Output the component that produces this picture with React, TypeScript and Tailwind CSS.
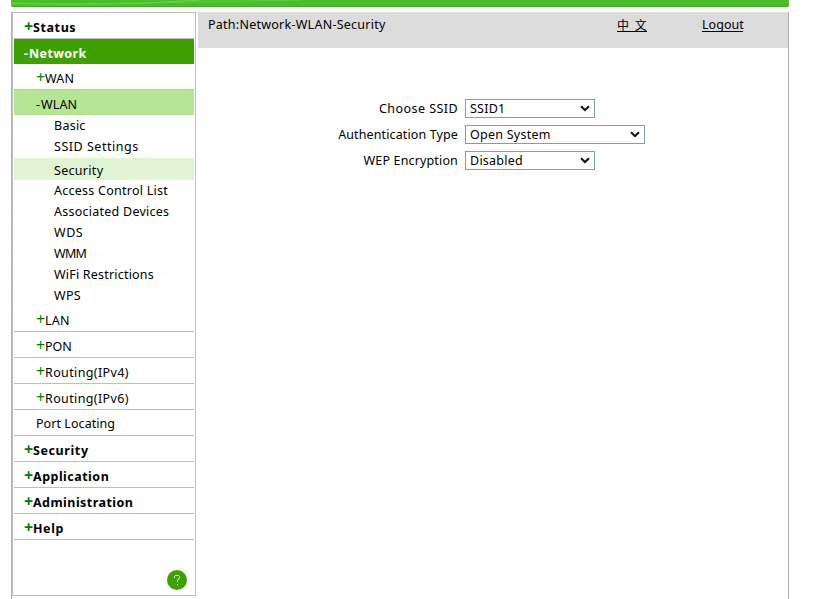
import React from "react";

type Item = { label: string; sign?: string; row: string; text: string };

const top = "h-[26px] border-b border-[#c0c0c0] pl-[10px] font-bold pt-[7px]";
const mid = "h-[26px] border-b border-[#c0c0c0] pl-[22px] pt-[7px]";
const sub = "h-[21px] border-b border-[#fbfff2] pl-[40px] pt-[3px]";

const items: Item[] = [
  { label: "Status", sign: "+", row: top, text: "tracking-[0.6px]" },
  { label: "Network", sign: "-", row: "h-[25px] bg-[#3e9f00] text-white pl-[10px] font-bold pt-[7px]", text: "tracking-[0.4px]" },
  { label: "WAN", sign: "+", row: mid, text: "tracking-[0.2px]" },
  { label: "WLAN", sign: "-", row: "h-[25px] bg-[#b5e694] pl-[22px] pt-[7px]", text: "tracking-[0.1px]" },
  { label: "Basic", row: sub, text: "tracking-[0.25px]" },
  { label: "SSID Settings", row: sub, text: "tracking-[0.52px]" },
  { label: "Security", row: "mt-px h-[22px] bg-[#e0f3d3] pl-[40px] pt-[5px]", text: "tracking-[0.3px]" },
  { label: "Access Control List", row: sub, text: "tracking-[0.25px]" },
  { label: "Associated Devices", row: sub, text: "tracking-[0.25px]" },
  { label: "WDS", row: sub, text: "tracking-[0.5px]" },
  { label: "WMM", row: sub, text: "tracking-[-0.7px]" },
  { label: "WiFi Restrictions", row: sub, text: "tracking-[0.2px]" },
  { label: "WPS", row: sub, text: "tracking-[0.3px]" },
  { label: "LAN", sign: "+", row: mid, text: "tracking-[0.2px]" },
  { label: "PON", sign: "+", row: mid, text: "tracking-[0px]" },
  { label: "Routing(IPv4)", sign: "+", row: mid, text: "tracking-[0.38px]" },
  { label: "Routing(IPv6)", sign: "+", row: mid, text: "tracking-[0.38px]" },
  { label: "Port Locating", row: "h-[26px] border-b border-[#c0c0c0] pl-[22px] pt-[6px]", text: "tracking-[0.06px]" },
  { label: "Security", sign: "+", row: top, text: "tracking-[0.6px]" },
  { label: "Application", sign: "+", row: top, text: "tracking-[0.48px]" },
  { label: "Administration", sign: "+", row: top, text: "tracking-[0.46px]" },
  { label: "Help", sign: "+", row: top, text: "tracking-[0.55px]" },
];

function MenuRow({ item }: { item: Item }) {
  return (
    <div className={`flex shrink-0 ${item.row}`}>
      {item.sign === "+" && <span className="-mt-px w-[9px] shrink-0 text-[16px] text-[#008000]">+</span>}
      {item.sign === "-" && <span className="w-[5px] shrink-0">-</span>}
      <span className={`whitespace-nowrap ${item.text}`}>{item.label}</span>
    </div>
  );
}

function Field({ label, value, width, text }: { label: string; value: string; width: string; text: string }) {
  return (
    <div className="flex h-[26px] items-start">
      <div className={`w-[260px] pt-[2px] text-right ${text}`}>{label}</div>
      <div className={`ml-[7px] flex h-[19px] items-center justify-between border border-[#7f9db9] bg-white pr-[4px] pl-[4px] ${width}`}>
        <span className="whitespace-nowrap">{value}</span>
        <svg width="10" height="7" viewBox="0 0 10 7" fill="none">
          <path d="M1 1.2L5 5L9 1.2" stroke="#101010" strokeWidth="2" />
        </svg>
      </div>
    </div>
  );
}

export default function App() {
  return (
    <div className="h-[599px] w-[821px] overflow-hidden bg-white pl-[11px] font-['Noto_Sans','DejaVu_Sans',sans-serif] text-[12.5px] leading-[15px] tracking-[0.25px] text-black">
      <div className="h-[7px] w-[778px] overflow-hidden rounded-b-[2px] bg-[#49bd2c]">
        <svg width="778" height="7" viewBox="0 0 778 7">
          <path d="M0 3 Q90 7 190 0" stroke="#73d34e" fill="none" />
          <path d="M0 4 Q110 4 290 0" stroke="#65c944" fill="none" />
          <path d="M0 6.5H778" stroke="#3daf23" />
        </svg>
      </div>
      <div className="mt-[5px] flex h-[587px] w-[778px] border-x border-[#b0b0b0]">
        <aside className="flex h-[584px] w-[184px] flex-col border border-[#c0c0c0] px-px">
          {items.map((item, i) => <MenuRow key={i} item={item} />)}
          <div className="flex flex-1 items-end justify-end pr-[6px] pb-[5px]">
            <div className="flex h-[20px] w-[21px] bg-[#f7f7f7]">
              <svg width="20" height="20" viewBox="0 0 20 20">
                <circle cx="10" cy="10" r="10" fill="#3e9f00" />
                <path d="M7.5 8V6.5L8.5 5.5H11.5L12.5 6.5V8L10.5 10V12M10.5 14V15" fill="none" stroke="white" />
              </svg>
            </div>
          </div>
        </aside>
        <main className="ml-[2px] flex-1">
          <header className="flex h-[36px] bg-[#dcdcdc] pt-[5px] pl-[10px]">
            <span className="w-[409px]">Path:Network-WLAN-Security</span>
            <a className="h-[15px] w-[30px] border-b border-black font-['Noto_Sans_CJK_SC',sans-serif] text-[12px] whitespace-nowrap [word-spacing:2.5px]">中 文</a>
            <a className="ml-[55px] h-[15px] w-[41px] border-b border-black tracking-[0.05px]">Logout</a>
          </header>
          <div className="pt-[51px]">
            <Field label="Choose SSID" value="SSID1" width="w-[130px]" text="tracking-[0.44px]" />
            <Field label="Authentication Type" value="Open System" width="w-[180px]" text="tracking-[0.12px]" />
            <Field label="WEP Encryption" value="Disabled" width="w-[130px]" text="tracking-[0.15px]" />
          </div>
        </main>
      </div>
    </div>
  );
}
